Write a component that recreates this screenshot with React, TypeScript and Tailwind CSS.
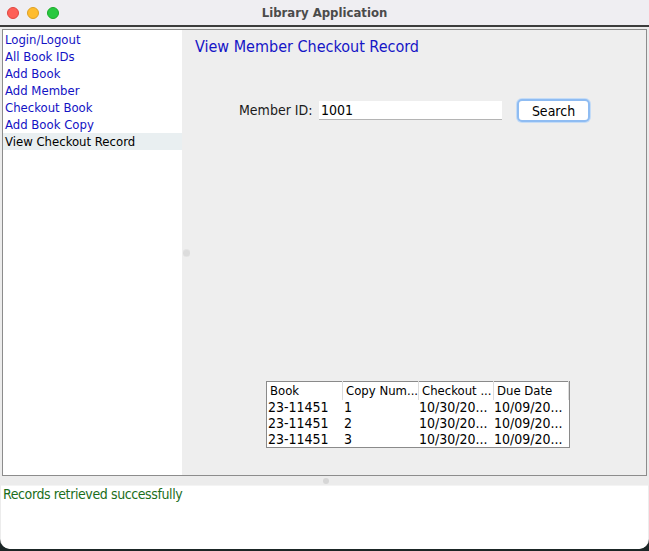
import React from "react";

const menuItems = [
    "Login/Logout",
    "All Book IDs",
    "Add Book",
    "Add Member",
    "Checkout Book",
    "Add Book Copy",
    "View Checkout Record",
];

const rows = [
    ["23-11451", "1", "10/30/20...", "10/09/20..."],
    ["23-11451", "2", "10/30/20...", "10/09/20..."],
    ["23-11451", "3", "10/30/20...", "10/09/20..."],
];

const font = { fontFamily: '"DejaVu Sans Condensed", "DejaVu Sans", sans-serif' };

const App = () => {
    const selected = "View Checkout Record";

    return (
        <div className="w-[649px] h-[551px] bg-[#1b2626] overflow-hidden" style={font}>
            <div className="w-[649px] h-[549px] bg-[#ececec] rounded-b-[10px] overflow-hidden flex flex-col">
                {/* title bar */}
                <div className="h-[27px] bg-[#efeef2] flex items-center relative border-b-2 border-[#3c3c3c]">
                    <div className="flex gap-[8px] pl-[7px]">
                        <span className="w-[12px] h-[12px] rounded-full bg-[#fe5f57] border border-[#e14640]" />
                        <span className="w-[12px] h-[12px] rounded-full bg-[#febc2e] border border-[#dfa023]" />
                        <span className="w-[12px] h-[12px] rounded-full bg-[#28c840] border border-[#1aab29]" />
                    </div>
                    <div className="absolute inset-0 flex items-center justify-center text-[13px] font-bold text-[#4b4b4b]">
                        Library Application
                    </div>
                </div>

                {/* main split */}
                <div className="mx-[2px] mt-[2px] h-[447px] border border-[#8c8c8c] flex">
                    <div className="w-[179px] bg-white pt-[1px]">
                        {menuItems.map((item) => (
                            <div
                                key={item}
                                className={`h-[17px] leading-[17px] pl-[2px] text-[13px] ${
                                    item === selected ? "bg-[#e9eff1] text-black" : "text-[#1212c4]"
                                }`}
                            >
                                {item}
                            </div>
                        ))}
                    </div>
                    <div className="flex-1 bg-[#eeeeee] relative">
                        <div className="absolute left-[1px] top-[219px] w-[7px] h-[8px] rounded-full bg-[#dcdcdc] border-y border-[#e4e4e4]" />
                        <div className="pl-[13px] pt-[5px] text-[16px] text-[#1515c6]">View Member Checkout Record</div>
                        <div className="flex items-center mt-[40px] pl-[57px]">
                            <span className="text-[14px] text-[#1a1a1a] w-[80px]">Member ID:</span>
                            <div className="w-[183px] h-[19px] bg-white border-b border-[#b4b4b4] text-[14px] leading-[19px] pl-[2px] text-black">
                                1001
                            </div>
                            <button className="ml-[15px] w-[73px] h-[23px] rounded-[5px] bg-white border-[2px] border-[#8fbcf2] shadow-[0_0_0_1px_#c4dcf7] text-[14px] text-black leading-none">
                                Search
                            </button>
                        </div>
                        <div className="mt-[259px] ml-[84px] w-[304px] border border-[#8a8a8a] bg-white text-[14px] text-black">
                            <div className="flex h-[17px] items-center text-[13px] whitespace-nowrap">
                                <span className="w-[76px] pl-[3px] border-r border-[#dcdcdc] overflow-hidden">Book</span>
                                <span className="w-[76px] pl-[3px] border-r border-[#dcdcdc] overflow-hidden">Copy Num...</span>
                                <span className="w-[75px] pl-[3px] border-r border-[#dcdcdc] overflow-hidden">Checkout ...</span>
                                <span className="w-[75px] pl-[3px] border-r border-[#dcdcdc] overflow-hidden">Due Date</span>
                            </div>
                            {rows.map((r, i) => (
                                <div key={i} className="flex h-[16px] items-center whitespace-nowrap">
                                    <span className="w-[76px] pl-[1px]">{r[0]}</span>
                                    <span className="w-[76px] pl-[1px]">{r[1]}</span>
                                    <span className="w-[75px]">{r[2]}</span>
                                    <span className="w-[75px]">{r[3]}</span>
                                </div>
                            ))}
                        </div>
                    </div>
                </div>

                {/* bottom split */}
                <div className="h-[9px] flex items-center justify-center">
                    <span className="w-[6px] h-[6px] rounded-full bg-[#d6d6d6] ml-[2px]" />
                </div>
                <div className="flex-1 mx-[1px] bg-white border-t border-[#f4f4f4] rounded-b-[9px] pl-[2px] leading-[17px] text-[14px] tracking-[-0.4px] text-[#1b6e1b]">
                    Records retrieved successfully
                </div>
            </div>
        </div>
    );
};

export default App;
